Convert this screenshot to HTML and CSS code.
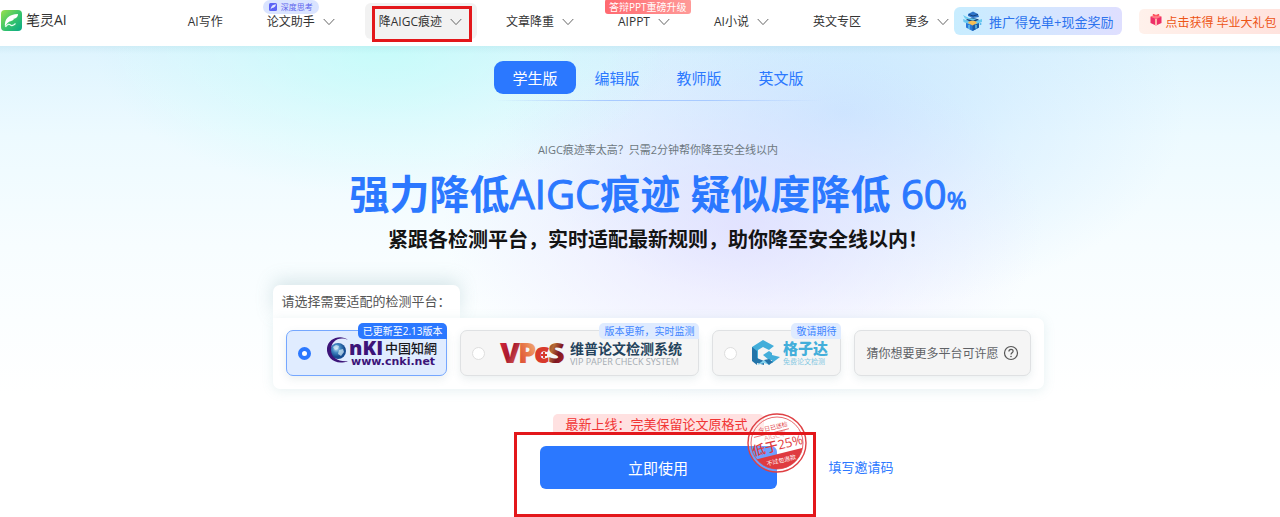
FILE: index.html
```html
<!DOCTYPE html>
<html lang="zh-CN">
<head>
<meta charset="utf-8">
<meta name="viewport" content="width=device-width, initial-scale=1">
<title>笔灵AI</title>
<link rel="stylesheet" href="styles.css">
</head>
<body>
<svg class="defs" aria-hidden="true">
  <symbol id="chevron" viewBox="0 0 12 8"><path d="M.7 1 6 6.600 11.300 1" fill="none" stroke="#666" stroke-width="1"/></symbol>
</svg>

<header class="header">
  <a class="brand" href="#">
    <svg class="brand-icon" viewBox="0 0 21 21" aria-hidden="true">
      <defs><linearGradient id="leaf" x1="0" y1="0" x2="1" y2="1"><stop offset="0" stop-color="#9be04c"/><stop offset=".5" stop-color="#3cc668"/><stop offset="1" stop-color="#07a987"/></linearGradient></defs>
      <rect width="21" height="21" rx="4" fill="url(#leaf)"/>
      <path d="M4 17C3 9 8 4 17 4c0 2-1 4-3 4.500l-2 .4 1 .4c-1.500 1.500-3 1.800-4.500 2.200C6.500 12.500 5 14.500 4 17z" fill="#fff"/>
      <path d="M4.500 17c2-3.500 4-3 5-2s3 .6 5-1.500" fill="none" stroke="#e9fff2" stroke-width="1.200"/>
    </svg>
    <span>笔灵AI</span>
  </a>
  <nav class="nav" aria-label="主导航">
    <a class="nav-item" href="#">AI写作</a>
    <a class="nav-item" href="#">论文助手<svg class="chevron"><use href="#chevron"/></svg>
      <span class="nav-tag nav-tag-think"><svg class="tag-icon" viewBox="0 0 8 8" aria-hidden="true"><rect width="8" height="8" rx="1.500" fill="#5b62f5"/><path d="M1.500 6.500C2 3 4 1.500 7 1.300 6.500 4 5 5 3 5z" fill="#dfe6ff"/></svg>深度思考</span>
    </a>
    <a class="nav-item is-current" href="#">降AIGC痕迹<svg class="chevron"><use href="#chevron"/></svg></a>
    <a class="nav-item" href="#">文章降重<svg class="chevron"><use href="#chevron"/></svg></a>
    <a class="nav-item" href="#">AIPPT<svg class="chevron"><use href="#chevron"/></svg>
      <span class="nav-tag nav-tag-hot">答辩PPT重磅升级</span>
    </a>
    <a class="nav-item" href="#">AI小说<svg class="chevron"><use href="#chevron"/></svg></a>
    <a class="nav-item" href="#">英文专区</a>
    <a class="nav-item" href="#">更多<svg class="chevron"><use href="#chevron"/></svg></a>
  </nav>
  <a class="promo" href="#">
    <svg class="promo-icon" viewBox="0 0 21 21" aria-hidden="true">
      <path d="M4 9l6.500 3L17 9v7.500L10.500 20 4 16.500z" fill="#2878d8"/>
      <path d="M10.500 12 17 9v7.500L10.500 20z" fill="#195aa8"/>
      <path d="M1 8l9 3-2 2.500L1.500 11zM20 8l-9 3 2 2.500L20 11z" fill="#69c8ef"/>
      <path d="M4 8.500l6-2 7 2-6.500 3.500z" fill="#123f79"/>
      <path d="M6 12c1-3.500 8-3.500 9 0l-4.500 2.500z" fill="#f6bd55"/>
      <path d="M1 4l6 3 8 1-4 1.500-8-2z" fill="#6bcbf0"/>
      <path d="M6 3l5-2.500L16 3l1 3-6 1-5-2z" fill="#2f74c9"/>
      <path d="M7 3.500l4 1.500 5-1.500" fill="none" stroke="#153f78" stroke-width="1"/>
      <circle cx="18.500" cy="13" r="1" fill="#50b6ed"/>
      <path d="M7 14v4M14 14v3.500" stroke="#6dd0f5" stroke-width="1.300"/>
    </svg>
    <span>推广得免单+现金奖励</span>
  </a>
  <a class="gift" href="#">
    <svg class="gift-icon" viewBox="0 0 14 14" aria-hidden="true">
      <path d="M1.500 4 7 2l5.500 2v6L7 12.500 1.500 10z" fill="#ed2f68"/>
      <path d="M1 3.500 7 1.500l6 2-6 2.500z" fill="#ff7b85"/>
      <path d="M7 6v6" stroke="#ffb3a9" stroke-width="2"/>
      <path d="M7 3C5 0 3 1 4 2.500 5 3.500 7 3 7 3s2 .5 3-.5C11 1 9 0 7 3z" fill="#ff4d59"/>
    </svg>
    <span>点击获得 毕业大礼包</span>
  </a>
</header>

<main class="main">
  <div class="tabs">
    <button class="tab is-active" type="button">学生版</button>
    <button class="tab" type="button">编辑版</button>
    <button class="tab" type="button">教师版</button>
    <button class="tab" type="button">英文版</button>
  </div>

  <p class="lead">AIGC痕迹率太高？只需2分钟帮你降至安全线以内</p>
  <h1 class="title">强力降低<span class="latin">AIGC</span>痕迹 疑似度降低 <span class="latin">60<span class="percent">%</span></span></h1>
  <h2 class="subtitle">紧跟各检测平台，实时适配最新规则，助你降至安全线以内！</h2>

  <fieldset class="platforms">
    <legend class="platforms-label">请选择需要适配的检测平台：</legend>
    <div class="panel">
      <label class="card is-selected">
        <input class="radio" type="radio" name="platform" aria-label="中国知网" checked>
        <svg class="logo logo-cnki" viewBox="0 0 112 34" role="img" aria-label="CNKI 中国知网">
          <defs><radialGradient id="globe" cx=".4" cy=".35"><stop offset="0" stop-color="#c3e4f7"/><stop offset=".5" stop-color="#4389c2"/><stop offset="1" stop-color="#154c91"/></radialGradient></defs>
          <circle cx="13" cy="15" r="8" fill="url(#globe)"/>
          <path d="M8 11l3-2 3 1-1 3-3 1zM14 14l4-1 1 3-3 4-3-2z" fill="#d9eef8" opacity=".7"/>
          <path d="M23 4C16-2 3 2 2 12c-1 10 9 18 21 13-9 1-17-3-17-11C6 5 14 0 23 4z" fill="#3c1479"/>
          <text class="cnki-main" x="24" y="19">nKI</text>
          <text class="cnki-zh" x="60" y="17">中国知網</text>
          <text class="cnki-url" x="26" y="29">www.cnki.net</text>
        </svg>
        <span class="card-tag card-tag-solid">已更新至2.13版本</span>
      </label>
      <label class="card">
        <input class="radio" type="radio" name="platform" aria-label="维普论文检测系统">
        <svg class="logo logo-vpcs" viewBox="0 0 190 30" role="img" aria-label="维普论文检测系统">
          <defs>
            <linearGradient id="v" x1="0" y1="0" x2="1" y2="1"><stop offset="0" stop-color="#e12b3c"/><stop offset=".5" stop-color="#a8192f"/><stop offset="1" stop-color="#f08b6d"/></linearGradient>
            <linearGradient id="p" x1="1" y1="0" x2="0" y2="1"><stop offset="0" stop-color="#f4c78d"/><stop offset=".5" stop-color="#e8794a"/><stop offset="1" stop-color="#d83b2c"/></linearGradient>
            <linearGradient id="s" x1="0" y1="0" x2="1" y2="1"><stop offset="0" stop-color="#5d1c23"/><stop offset=".35" stop-color="#b66c35"/><stop offset=".6" stop-color="#7d1722"/><stop offset="1" stop-color="#c02a2b"/></linearGradient>
          </defs>
          <text class="vpcs-letter" x="0" y="25" fill="url(#v)">V</text>
          <text class="vpcs-letter" x="18" y="25" fill="url(#p)">P</text>
          <text class="vpcs-letter" x="34" y="25" fill="#d83a2c">c</text>
          <text class="vpcs-letter" x="48" y="25" fill="url(#s)">S</text>
          <path d="M44 14v6M41 17h6" stroke="#d83a2c" stroke-width="2"/>
          <text class="vpcs-zh" x="70" y="16">维普论文检测系统</text>
          <text class="vpcs-en" x="70" y="27">VIP PAPER CHECK SYSTEM</text>
        </svg>
        <span class="card-tag">版本更新，实时监测</span>
      </label>
      <label class="card">
        <input class="radio" type="radio" name="platform" aria-label="格子达">
        <svg class="logo logo-gezida" viewBox="0 0 78 30" role="img" aria-label="格子达 免费论文检测">
          <path d="M1 9 12 2l11 6-5 4-6-3-5 3v10l-6-2z" fill="#43aeda"/>
          <path d="M1 9l5 4v14l-5-4z" fill="#2374a9"/>
          <path d="M6 20l7 3v4l-7-2z" fill="#2374a9"/>
          <path d="M6 27l7-5 6 5-6-2z" fill="#7fd0ed"/>
          <path d="M12 17l6-4 3 2v2l8 2-8 6v-3h-3z" fill="#43aeda"/>
          <path d="M13 22l5 5 4-3-4-3z" fill="#2374a9"/>
          <text class="gezida-zh" x="32" y="16">格子达</text>
          <text class="gezida-sub" x="32" y="26">免费论文检测</text>
        </svg>
        <span class="card-tag">敬请期待</span>
      </label>
      <button class="card card-wish" type="button">
        <span>猜你想要更多平台可许愿</span>
        <svg class="help" viewBox="0 0 16 16" aria-hidden="true"><circle cx="8" cy="8" r="6.500" fill="none" stroke="#555" stroke-width="1.200"/><path d="M5.900 6.500C6 3.600 10.200 3.700 10.100 6.300 10 7.800 8 7.800 8 9.500" fill="none" stroke="#555" stroke-width="1.200"/><circle cx="8" cy="11.500" r=".8" fill="#555"/></svg>
      </button>
    </div>
  </fieldset>

  <div class="action-row">
    <div class="action">
      <p class="ribbon">最新上线：完美保留论文原格式</p>
      <button class="start" type="button">立即使用</button>
      <svg class="stamp" viewBox="0 0 62 62" role="img" aria-label="低于25%，不过包退款">
        <defs><clipPath id="seal"><circle cx="31" cy="31" r="26"/></clipPath></defs>
        <circle cx="31" cy="31" r="29" fill="#fff" fill-opacity=".3" stroke="#df4044" stroke-width="1.400"/>
        <circle cx="31" cy="31" r="26" fill="none" stroke="#df4044" stroke-width=".8"/>
        <g transform="rotate(-14 31 31)">
          <path d="M4 42h54v20H4z" fill="#df3b40" clip-path="url(#seal)"/>
          <path d="M10 20h36" stroke="#df4044" stroke-width=".7"/>
          <text class="stamp-small" x="31" y="17">今日已送检</text>
          <text class="stamp-faint" x="31" y="26">AIGC率</text>
          <text class="stamp-main" x="31" y="38">低于25%</text>
          <text class="stamp-foot" x="31" y="51">不过包退款</text>
        </g>
      </svg>
    </div>
    <a class="invite" href="#">填写邀请码</a>
  </div>
</main>
</body>
</html>
```
FILE: styles.css
```css
* { box-sizing: border-box; }

body {
  margin: 0;
  overflow-x: hidden;
  background: #fff;
  color: #333;
  font-family: "Open Sans", "Noto Sans CJK SC", sans-serif;
  font-size: 12px;
}

a { color: inherit; text-decoration: none; }
button { font: inherit; cursor: pointer; }
p, h1, h2 { margin: 0; }
.defs { display: block; width: 0; height: 0; }

/* Header */
.header {
  position: relative;
  display: flex;
  align-items: center;
  height: 46px;
  overflow: hidden;
  background: #fff;
  white-space: nowrap;
}
.header > * { flex: none; }
.brand { display: flex; align-items: center; gap: 4px; padding: 0 0 6px 1px; font-size: 14px; line-height: 20px; }
.brand-icon { width: 21px; height: 21px; }
.nav { display: flex; gap: 44px; margin-left: 121px; padding-bottom: 2px; }
.nav-item { position: relative; display: flex; align-items: center; gap: 8px; line-height: 20px; }
.chevron { width: 12px; height: 8px; }
.nav-item.is-current { z-index: 0; }
.nav-item.is-current::before {
  content: "";
  position: absolute;
  z-index: -1;
  inset: -9px -15px -7px -14px;
  border-radius: 6px;
  background: #f2f2f2;
}
.nav-item.is-current::after {
  content: "";
  position: absolute;
  inset: -6px -10px -10px -7px;
  border: 3px solid #e3171b;
}
.nav-tag {
  position: absolute;
  bottom: 18px;
  display: flex;
  align-items: center;
}
.nav-tag-think {
  left: -4px;
  gap: 4px;
  height: 14px;
  padding: 0 6px;
  border-radius: 7px;
  background: #dae4ff;
  color: #5c63ed;
  font-size: 8px;
}
.nav-tag-hot {
  left: -13px;
  height: 15px;
  padding: 0 4px;
  border-radius: 3px;
  background: linear-gradient(90deg, #ff6970, #ff9a98);
  color: #fff;
  font-size: 10px;
}
.tag-icon { width: 8px; height: 8px; }
.promo {
  display: flex;
  align-items: center;
  gap: 6px;
  height: 28px;
  margin: 0 17px 4px 5px;
  padding: 0 9px 0 8px;
  border-radius: 6px;
  background: linear-gradient(90deg, #c8edff, #dfdfff);
  color: #2c73ee;
  font-size: 13px;
}
.promo-icon { width: 21px; height: 21px; }
.gift {
  display: flex;
  align-items: center;
  gap: 2px;
  height: 25px;
  margin-bottom: 3px;
  padding: 0 12px 0 10px;
  border-radius: 5px;
  background: linear-gradient(90deg, #fff1eb, #ffe2dd);
  color: #ed5415;
}
.gift-icon { width: 14px; height: 14px; margin-bottom: 4px; }

/* Hero */
.main {
  display: flex;
  flex-direction: column;
  align-items: center;
  padding: 15px 0 28px 36px;
  background:
    linear-gradient(180deg, rgba(130, 190, 205, .14), transparent 8px),
    radial-gradient(ellipse 290px 150px at 30% 0, rgba(188, 255, 248, .7), rgba(188, 255, 248, .3) 50%, transparent),
    radial-gradient(ellipse 300px 180px at 58% 38%, rgba(222, 216, 255, .65), rgba(222, 216, 255, .3) 50%, transparent),
    radial-gradient(ellipse 340px 200px at 66% 14%, rgba(190, 224, 255, .7), rgba(190, 224, 255, .3) 50%, transparent),
    linear-gradient(180deg, #def4fe 0, #edfaff 90px, #f7fdff 200px, #fff 350px);
}
.tabs { position: relative; display: grid; grid-template-columns: repeat(4, 82px); padding-bottom: 7px; }
.tabs::after {
  content: "";
  position: absolute;
  inset: auto 0 0;
  height: 1px;
  background: linear-gradient(90deg, transparent, #a8caff 35%, #a8caff 65%, transparent);
}
.tab {
  height: 33px;
  padding: 0;
  border: 0;
  border-radius: 9px;
  background: none;
  color: #2b78ff;
  font-size: 15px;
}
.tab.is-active { background: #2b78ff; color: #fff; }
.lead { margin-top: 40px; color: #6d7880; font-size: 11px; line-height: 18px; }
.title { margin-top: 9px; color: #2b78ff; font-size: 40px; font-weight: 700; line-height: 52px; }
.latin { font-weight: 400; -webkit-text-stroke: 1px #2b78ff; }
.percent { font-size: 24px; }
.subtitle { color: #141414; font-size: 20px; font-weight: 700; line-height: 28px; }

/* Platform picker */
.platforms { width: 771px; max-width: 100%; margin: 31px 0 0; padding: 0; border: 0; }
.platforms-label {
  display: block;
  padding: 0 9px;
  border-radius: 7px 7px 0 0;
  background: #fff;
  box-shadow: 0 -5px 18px rgba(95, 145, 155, .22);
  color: #555;
  font-size: 13px;
  line-height: 33px;
}
.panel {
  position: relative;
  display: grid;
  grid-template-columns: 162fr 239fr 129fr 176fr;
  gap: 13px;
  padding: 12px 13px 13px;
  border-radius: 0 7px 7px 7px;
  background: #fff;
  box-shadow: 0 2px 12px rgba(95, 160, 170, .15);
}
.card {
  position: relative;
  display: flex;
  align-items: center;
  height: 46px;
  padding: 0 4px 0 11px;
  border: 1px solid #dfe1e3;
  border-radius: 7px;
  background: #f5f5f5;
  box-shadow: 0 3px 8px rgba(80, 120, 130, .12);
  color: #606266;
  font-size: 12px;
}
.card.is-selected { border-color: #75a7ff; background: #e0ecff; }
.card-wish { gap: 4px; padding: 0 11px; white-space: nowrap; }
.radio {
  appearance: none;
  flex: none;
  width: 13px;
  height: 13px;
  margin: 0;
  border: 1px solid #dedede;
  border-radius: 50%;
  background: #fff;
}
.radio:checked { border: 4px solid #2b78ff; }
.logo { flex: none; overflow: visible; }
.logo-cnki { width: 112px; height: 34px; margin-left: 14px; }
.logo-vpcs { width: 190px; height: 30px; margin-left: 15px; }
.logo-gezida { width: 78px; height: 30px; margin-left: 14px; }
.help { flex: none; width: 16px; height: 16px; }
.card-tag {
  position: absolute;
  top: -8px;
  right: -1px;
  padding: 0 5px;
  border-radius: 5px 5px 0 5px;
  background: #dfebff;
  color: #3e85ff;
  font-size: 10px;
  line-height: 16px;
  white-space: nowrap;
}
.card-tag-solid { background: #2b78ff; color: #fff; }

/* Logo lettering */
.cnki-main { fill: #3c1479; font: 800 20px "Open Sans", sans-serif; }
.cnki-zh { fill: #17171d; font: 500 13px "Noto Sans CJK SC", sans-serif; }
.cnki-url { fill: #3c1479; font: 700 11px "DejaVu Sans", sans-serif; }
.vpcs-letter { font: 800 29px "Open Sans", sans-serif; }
.vpcs-zh { fill: #24435c; font: 700 14px "Noto Sans CJK SC", sans-serif; }
.vpcs-en { fill: #a4abb2; font: 9px "Open Sans", sans-serif; }
.gezida-zh { fill: #43aeda; font: 900 15px "Noto Sans CJK SC", sans-serif; }
.gezida-sub { fill: #84c8e2; font: 7px "Noto Sans CJK SC", sans-serif; }

/* Call to action */
.action-row {
  display: grid;
  grid-template-columns: 1fr auto 1fr;
  align-self: stretch;
  align-items: end;
  margin-top: 25px;
}
.action { position: relative; grid-column: 2; width: 237px; }
.action::after {
  content: "";
  position: absolute;
  inset: 18px -39px -28px -26px;
  border: 3px solid #e3171b;
  pointer-events: none;
}
.ribbon {
  margin: 0 13px 11px;
  padding-left: 13px;
  border-radius: 5px 5px 0 0;
  background: #ffe1e1;
  color: #f13434;
  font-size: 13px;
  line-height: 21px;
  white-space: nowrap;
}
.start {
  display: block;
  width: 100%;
  height: 43px;
  border: 0;
  border-radius: 6px;
  background: #2b78ff;
  color: #fff;
  font-size: 15px;
}
.stamp { position: absolute; top: -2px; right: -31px; width: 62px; height: 62px; }
.stamp text { fill: #df3b40; text-anchor: middle; font-family: "Open Sans", "Noto Sans CJK SC", sans-serif; }
.stamp .stamp-small { font-size: 6px; }
.stamp .stamp-faint { font-size: 7px; opacity: .5; }
.stamp .stamp-main { font-size: 13px; font-weight: 500; }
.stamp .stamp-foot { fill: #fff; font-size: 6px; }
.invite { justify-self: start; margin: 0 0 12px 52px; color: #2b78ff; font-size: 13px; line-height: 20px; }
```
